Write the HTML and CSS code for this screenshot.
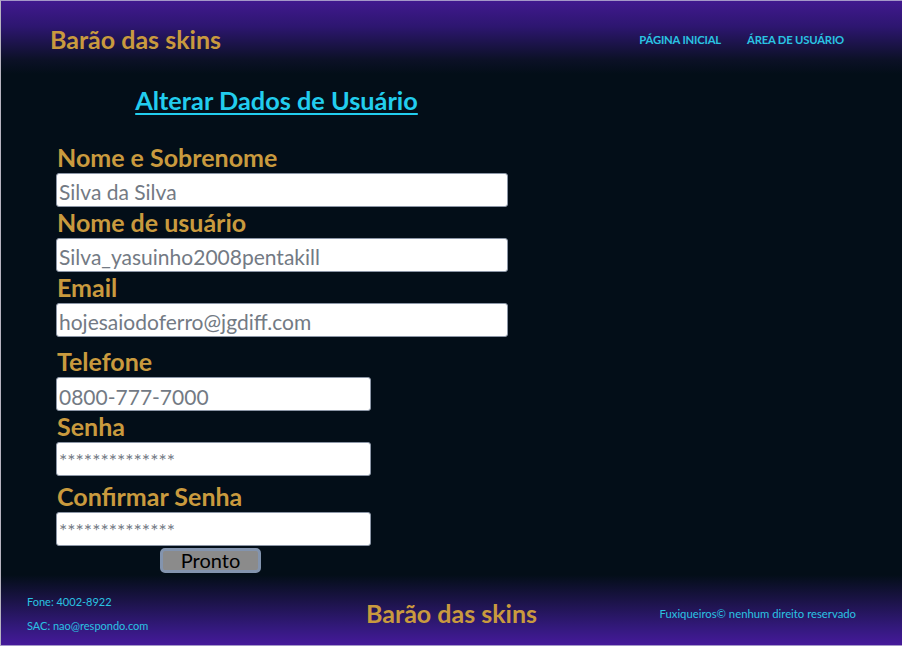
FILE: index.html
```html
<!DOCTYPE html>
<html lang="pt-BR">
<head>
<meta charset="utf-8">
<title>Barão das skins - Alterar Dados</title>
<link rel="stylesheet" href="styles.css">
</head>
<body>
<div class="page">
  <header class="site-header">
    <div class="brand">Barão das skins</div>
    <nav class="nav">
      <a href="#" class="nav-link">PÁGINA INICIAL</a>
      <a href="#" class="nav-link">ÁREA DE USUÁRIO</a>
    </nav>
  </header>

  <main class="content">
    <form class="form">
      <h2 class="form-title"><a href="#">Alterar Dados de Usuário</a></h2>

      <label class="field-label">Nome e Sobrenome</label>
      <input class="field" type="text" placeholder="Silva da Silva">

      <label class="field-label">Nome de usuário</label>
      <input class="field" type="text" placeholder="Silva_yasuinho2008pentakill">

      <label class="field-label">Email</label>
      <input class="field" type="text" placeholder="hojesaiodoferro@jgdiff.com">

      <label class="field-label field-label--spaced">Telefone</label>
      <input class="field field--short field--phone" type="text" placeholder="0800-777-7000">

      <label class="field-label">Senha</label>
      <input class="field field--short field--pass" type="text" placeholder="**************">

      <label class="field-label field-label--spaced-sm">Confirmar Senha</label>
      <input class="field field--short field--pass" type="text" placeholder="**************">

      <div class="actions">
        <button type="button" class="btn">Pronto</button>
      </div>
    </form>
  </main>

  <footer class="site-footer">
    <div class="contact">
      <span>Fone: 4002-8922</span>
      <span>SAC: nao@respondo.com</span>
    </div>
    <div class="brand brand--footer">Barão das skins</div>
    <div class="copy">Fuxiqueiros© nenhum direito reservado</div>
  </footer>
</div>
</body>
</html>
```

FILE: styles.css
```css
* { box-sizing: border-box; }

html, body {
  margin: 0;
  padding: 0;
  height: 100%;
}

body {
  font-family: Lato, "Open Sans", "Liberation Sans", sans-serif;
  background: #030e18;
}

.page {
  height: 646px;
  display: flex;
  flex-direction: column;
  background: #030e18;
  border-top: 1px solid #a497c8;
  border-left: 1px solid #b7b4c0;
  border-bottom: 1px solid #a497c8;
  overflow: hidden;
}

.site-header {
  height: 73px;
  flex: none;
  display: flex;
  align-items: center;
  justify-content: space-between;
  padding: 0 58px 0 49px;
  background: linear-gradient(to bottom, #41198f 0%, #2d1670 35%, #0c1127 80%, #030e18 100%);
}

.brand {
  color: #c99a3e;
  font-size: 25px;
  font-weight: 700;
  line-height: 30px;
  padding-top: 3px;
}

.nav {
  display: flex;
  gap: 26px;
  padding-top: 4px;
}

.nav-link {
  color: #2ac3e2;
  font-size: 11.3px;
  font-weight: 700;
  text-decoration: none;
  letter-spacing: -0.2px;
}

.content {
  flex: 1;
  padding: 11px 0 0 55px;
}

.form {
  width: 452px;
  display: flex;
  flex-direction: column;
  align-items: flex-start;
}

.form-title {
  align-self: stretch;
  margin: 0 0 27px;
  padding-right: 11px;
  text-align: center;
  font-size: 25.3px;
  line-height: 30px;
  font-weight: 700;
}

.form-title a {
  color: #22cdee;
  text-decoration: underline;
  text-decoration-thickness: 2px;
  text-underline-offset: 3px;
}

.field-label {
  display: block;
  color: #c99a3e;
  font-size: 25px;
  line-height: 31px;
  font-weight: 700;
  padding-left: 1px;
}

.field-label--spaced { margin-top: 9px; }
.field-label--spaced-sm { margin-top: 5px; }

.field {
  display: block;
  width: 452px;
  height: 34px;
  margin: 0;
  padding: 5px 2px 2px 2px;
  border: 1px solid #8c96a6;
  border-radius: 3px;
  background: #fff;
  font-family: Lato, "Open Sans", "Liberation Sans", sans-serif;
  font-size: 21px;
  line-height: 25px;
  color: #737a84;
  outline: none;
}

.field::placeholder { color: #737a84; opacity: 1; }

.field--short { width: 315px; }

.field--phone {
  font-size: 21px;
  line-height: 25px;
  padding-top: 7px;
}

.field--pass {
  font-size: 19.5px;
  line-height: 22px;
  padding-top: 5px;
  letter-spacing: 0;
}

.actions {
  width: 315px;
  display: flex;
  justify-content: center;
  margin-top: 2px;
  padding-right: 6px;
}

.btn {
  width: 101px;
  height: 25px;
  padding: 0;
  border: 3px solid #8394ae;
  border-radius: 5px;
  background: #8b8b8b;
  color: #000;
  font-family: Lato, "Open Sans", "Liberation Sans", sans-serif;
  font-size: 20px;
  line-height: 19px;
}

.site-footer {
  height: 70px;
  flex: none;
  display: grid;
  grid-template-columns: 1fr auto 1fr;
  align-items: center;
  padding: 0 26px;
  background: linear-gradient(to bottom, #030e18 0%, #1a1345 35%, #33197c 75%, #45199a 100%);
}

.contact {
  display: flex;
  flex-direction: column;
  gap: 9px;
  color: #2ac3e2;
  font-size: 11px;
  line-height: 15px;
  padding-top: 6px;
}

.brand--footer {
  padding: 6px 0 0;
}

.copy {
  justify-self: end;
  color: #2ac3e2;
  font-size: 11.3px;
  line-height: 15px;
  padding-top: 6px;
  padding-right: 20px;
}
```
